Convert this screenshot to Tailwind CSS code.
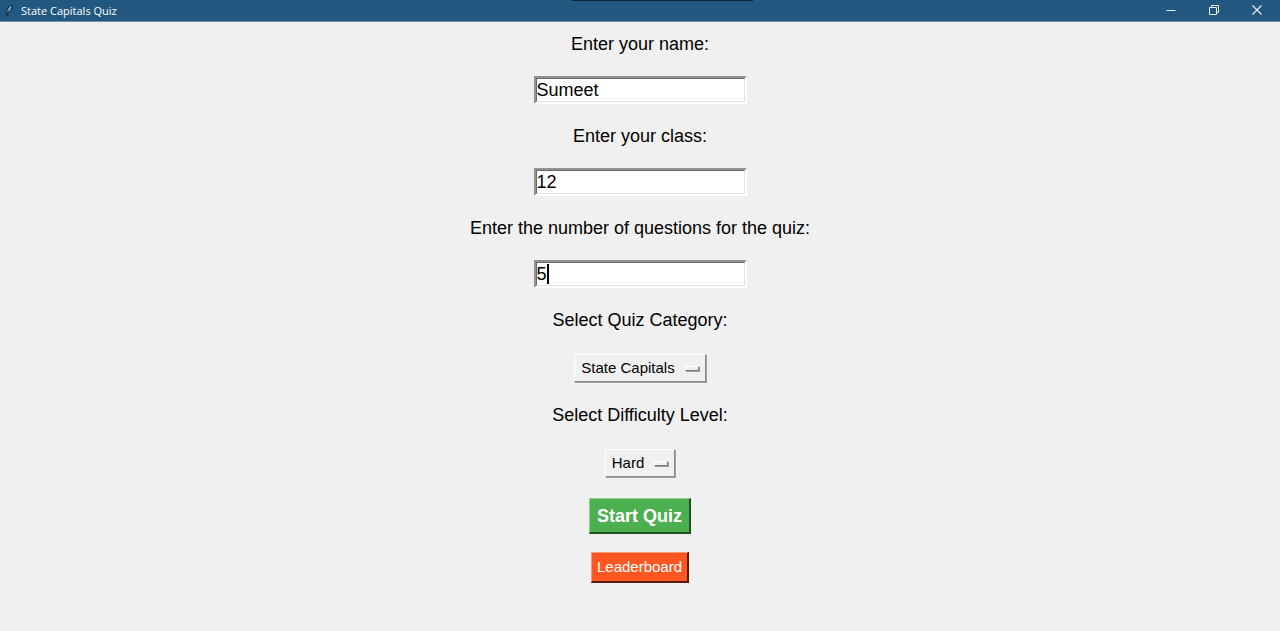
<!DOCTYPE html>
<html lang="en">
<head>
<meta charset="utf-8">
<meta name="viewport" content="width=device-width, initial-scale=1">
<title>State Capitals Quiz</title>
<script src="https://cdn.jsdelivr.net/npm/@tailwindcss/browser@4"></script>
</head>
<body class="min-h-screen bg-[#f0f0f0] font-['Liberation_Sans',sans-serif] text-black">
<header class="relative flex h-[22px] items-center justify-between border-b border-[#6f93ae] bg-[#22587f] text-white">
  <div class="absolute top-0 left-1/2 ml-[-68px] h-px w-[181px] bg-[#0d2233]"></div>
  <div class="flex items-center gap-1 pl-[3px]">
    <svg class="h-4 w-3.5" viewBox="0 0 14 16" aria-hidden="true">
      <path d="M8.500 2C5.500 3.500 3.500 6.500 3.600 10L4.600 11.500C7.500 9.500 9.200 6 8.500 2Z" fill="#5f93bc" stroke="#0c1c2b" stroke-width=".9"/>
      <path d="M7.500 4.500L4.800 10L3 14" fill="none" stroke="#0c1c2b" stroke-width=".8"/>
      <path d="M8 3.500L5.800 7.500" stroke="#d5e6f3" stroke-width=".8"/>
    </svg>
    <h1 class="font-['Open_Sans',sans-serif] text-[11px] leading-4">State Capitals Quiz</h1>
  </div>
  <div class="flex h-full items-center pb-0.5">
    <button type="button" aria-label="Minimize" class="flex w-[43px] justify-center"><svg class="size-3" viewBox="0 0 12 12" fill="none" stroke="#e6eef4"><path d="M1.500 6.500H10.500"/></svg></button>
    <button type="button" aria-label="Restore" class="flex w-[43px] justify-center"><svg class="size-3" viewBox="0 0 12 12" fill="none" stroke="#e6eef4"><path d="M1.500 3.500H8.500V10.500H1.500ZM3.500 3.500V1.500H10.500V8.500H8.500"/></svg></button>
    <button type="button" aria-label="Close" class="flex w-[43px] justify-center"><svg class="size-3" viewBox="0 0 12 12" fill="none" stroke="#e6eef4" stroke-width="1.200"><path d="M1.500 1.500L10.500 10.500M10.500 1.500L1.500 10.500"/></svg></button>
    <span class="w-0.5"></span>
  </div>
</header>
<main>
  <form class="flex flex-col items-center gap-5 pt-2.5 pb-12 text-lg leading-6">
    <label for="name">Enter your name:</label>
    <div class="border-2 border-t-[#929292] border-r-white border-b-white border-l-[#929292]">
      <input id="name" type="text" value="Sumeet" class="block h-6 w-[209px] border border-t-[#696969] border-r-[#e3e3e3] border-b-[#e3e3e3] border-l-[#696969] bg-white outline-none">
    </div>
    <label for="class">Enter your class:</label>
    <div class="border-2 border-t-[#929292] border-r-white border-b-white border-l-[#929292]">
      <input id="class" type="text" value="12" class="block h-6 w-[209px] border border-t-[#696969] border-r-[#e3e3e3] border-b-[#e3e3e3] border-l-[#696969] bg-white outline-none">
    </div>
    <label for="count">Enter the number of questions for the quiz:</label>
    <div class="relative border-2 border-t-[#929292] border-r-white border-b-white border-l-[#929292]">
      <input id="count" type="text" inputmode="numeric" value="5" class="block h-6 w-[209px] border border-t-[#696969] border-r-[#e3e3e3] border-b-[#e3e3e3] border-l-[#696969] bg-white caret-transparent outline-none">
      <span class="pointer-events-none absolute top-0.5 left-[11px] h-5 w-0.5 bg-black"></span>
    </div>
    <label for="category">Select Quiz Category:</label>
    <div class="relative flex h-[31px] items-center text-[15px]">
      <select id="category" class="field-sizing-content h-7 appearance-none border border-t-white border-r-[#8a8a8a] border-b-[#8a8a8a] border-l-white bg-[#f0f0f0] pr-[30px] pl-1.5 leading-6 shadow-[1px_1px_0_#a0a0a0] outline-none"><option>State Capitals</option></select>
      <span class="pointer-events-none absolute top-3.5 right-[7px] h-[5px] w-3.5 border border-t-white border-r-[#777777] border-b-[#777777] border-l-white shadow-[1px_1px_0_#a0a0a0]"></span>
    </div>
    <label for="difficulty">Select Difficulty Level:</label>
    <div class="relative flex h-[31px] items-center text-[15px]">
      <select id="difficulty" class="field-sizing-content h-7 appearance-none border border-t-white border-r-[#8a8a8a] border-b-[#8a8a8a] border-l-white bg-[#f0f0f0] pr-[30px] pl-1.5 leading-6 shadow-[1px_1px_0_#a0a0a0] outline-none"><option>Hard</option></select>
      <span class="pointer-events-none absolute top-3.5 right-[7px] h-[5px] w-3.5 border border-t-white border-r-[#777777] border-b-[#777777] border-l-white shadow-[1px_1px_0_#a0a0a0]"></span>
    </div>
    <div class="flex flex-col items-center gap-[18px]">
      <button type="submit" class="h-9 border-t border-r-2 border-b-2 border-l border-t-[#8fd092] border-r-[#20521f] border-b-[#20521f] border-l-[#8fd092] bg-[#4caf50] px-[7px] font-bold text-white">Start Quiz</button>
      <button type="button" class="border-t border-r-2 border-b-2 border-l border-t-[#ff9a78] border-r-[#5a1a08] border-b-[#5a1a08] border-l-[#ff9a78] bg-[#ff5722] px-[5px] py-0.5 text-[15px] leading-6 text-white">Leaderboard</button>
    </div>
  </form>
</main>
</body>
</html>
